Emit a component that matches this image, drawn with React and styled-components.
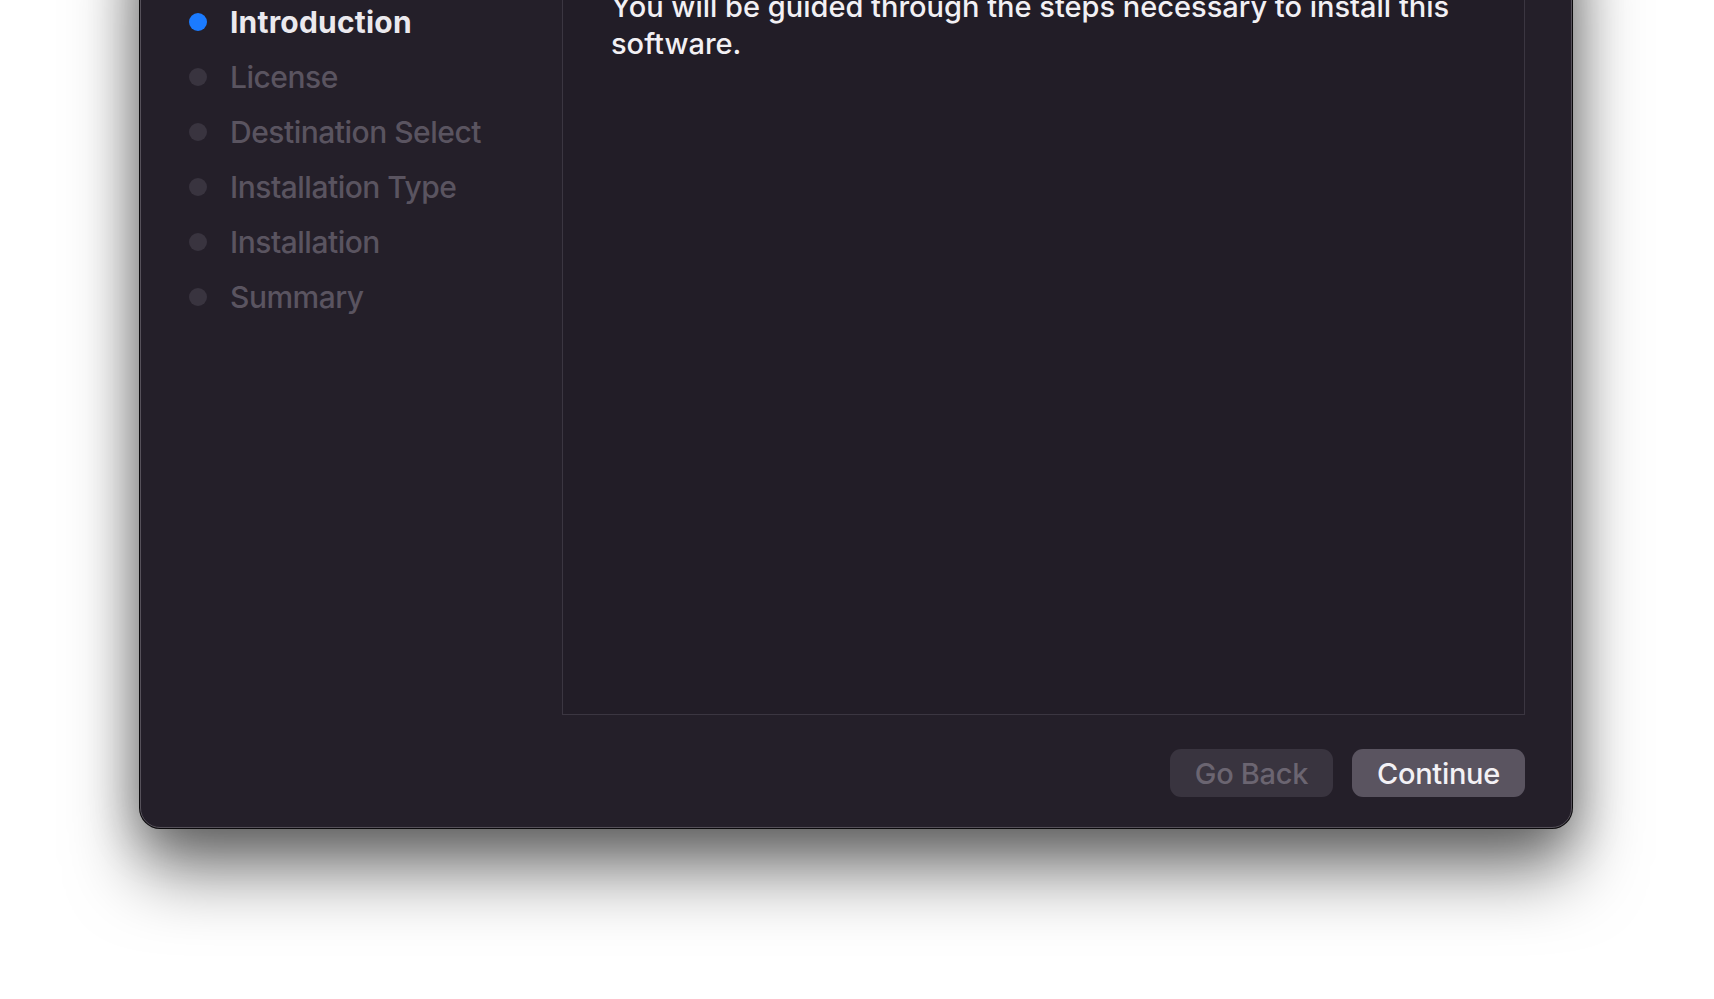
import React from "react";
import styled, { createGlobalStyle } from "styled-components";

const GlobalStyle = createGlobalStyle`
  html, body {
    margin: 0;
    padding: 0;
    background: #ffffff;
    overflow: hidden;
  }
  body {
    font-family: Inter, "Noto Sans", "Liberation Sans", sans-serif;
    -webkit-font-smoothing: antialiased;
  }
`;

const steps = [
  "Introduction",
  "License",
  "Destination Select",
  "Installation Type",
  "Installation",
  "Summary",
];

const Page = styled.div`
  width: 1714px;
  height: 999px;
  overflow: hidden;
  padding-left: 140px;
  box-sizing: border-box;
`;

const Window = styled.div`
  width: 1432px;
  margin-top: -100px;
  padding-top: 39px;
  box-sizing: border-box;
  background: #241f29;
  border: 1px solid #56515a;
  border-radius: 20px;
  box-shadow: 0 0 0 1px #0b0a0c, 0 44px 70px rgba(0, 0, 0, 0.5),
    0 10px 50px rgba(0, 0, 0, 0.32);
  display: flex;
  flex-direction: column;
`;

const Main = styled.div`
  display: flex;
  height: 775px;
  padding-right: 46px;
`;

const Sidebar = styled.ul`
  width: 421px;
  flex-shrink: 0;
  margin: 0;
  padding: 54px 0 0 48px;
  box-sizing: border-box;
  list-style: none;
`;

const Step = styled.li`
  display: flex;
  align-items: center;
  height: 55px;
  gap: 23px;
  font-size: 30px;
  font-weight: ${(p) => (p.$active ? 700 : 500)};
  color: ${(p) => (p.$active ? "#ebe9ee" : "#5a5460")};
  letter-spacing: ${(p) => (p.$active ? "0.2px" : "-0.5px")};
  white-space: nowrap;
`;

const Dot = styled.span`
  width: 18px;
  height: 18px;
  border-radius: 50%;
  flex-shrink: 0;
  background: ${(p) => (p.$active ? "#1b7bff" : "#39343f")};
`;

const Panel = styled.div`
  flex: 1;
  border: 1px solid #3b3641;
  background: #221d27;
  padding: 47px 20px 0 48px;
  box-sizing: border-box;
`;

const Message = styled.p`
  margin: 0;
  max-width: 880px;
  font-size: 29px;
  line-height: 37px;
  font-weight: 500;
  letter-spacing: 0;
  color: #f2f0f4;
`;

const Footer = styled.div`
  display: flex;
  justify-content: flex-end;
  gap: 19px;
  padding: 34px 46px 30px 0;
`;

const Button = styled.button`
  height: 48px;
  padding: 0 ${(p) => (p.$primary ? 25 : 23)}px;
  min-width: ${(p) => (p.$primary ? 173 : 163)}px;
  border: none;
  border-radius: 11px;
  font-family: inherit;
  font-size: 29px;
  font-weight: 500;
  letter-spacing: -0.3px;
  background: ${(p) => (p.$primary ? "#5a5460" : "#39343f")};
  color: ${(p) => (p.$primary ? "#f3f1f5" : "#6b6571")};
  cursor: ${(p) => (p.disabled ? "default" : "pointer")};
`;

export default function App() {
  return (
    <>
      <GlobalStyle />
      <Page>
        <Window>
          <Main>
            <Sidebar>
              {steps.map((s, i) => (
                <Step key={s} $active={i === 0}>
                  <Dot $active={i === 0} />
                  {s}
                </Step>
              ))}
            </Sidebar>
            <Panel>
              <Message>
                You will be guided through the steps necessary to install this
                software.
              </Message>
            </Panel>
          </Main>
          <Footer>
            <Button disabled>Go Back</Button>
            <Button $primary>Continue</Button>
          </Footer>
        </Window>
      </Page>
    </>
  );
}
